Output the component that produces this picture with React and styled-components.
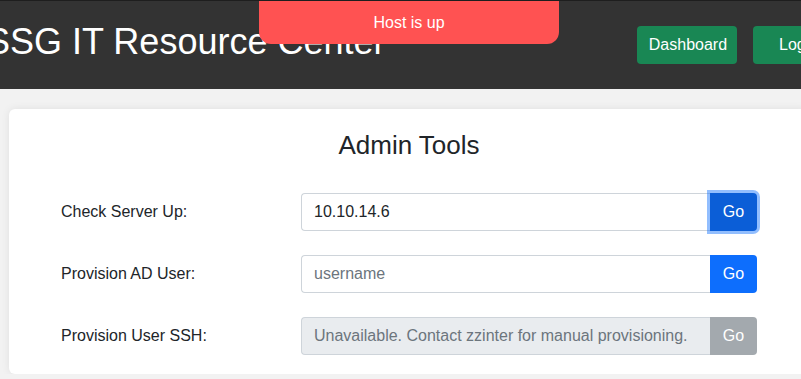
import React from 'react'
import styled, { createGlobalStyle } from 'styled-components'

const GlobalStyle = createGlobalStyle`
    html, body {
        margin: 0;
        padding: 0;
        background-color: #f2f2f2;
        overflow: hidden;
        font-family: "Liberation Sans", Arial, sans-serif;
    }
`

const Page = styled.div`
    width: 818px;
    position: relative;
`

const Header = styled.header`
    background-color: #333333;
    border-top: 1px solid #1e1e1e;
    height: 88px;
    display: flex;
    align-items: center;
    justify-content: space-between;
`

const Title = styled.h1`
    margin: 0 0 0 -14px;
    padding-bottom: 7px;
    font-size: 36px;
    font-weight: 400;
    line-height: 1.2;
    color: #ffffff;
    white-space: nowrap;
`

const Nav = styled.nav`
    display: flex;
    gap: 16px;
    margin-right: -36px;
`

const NavButton = styled.a`
    display: flex;
    align-items: center;
    height: 38px;
    padding: ${p => p.$wide ? '0 26px' : '0 10px 0 12px'};
    box-sizing: border-box;
    background-color: #198754;
    border-radius: 4px;
    color: #ffffff;
    font-size: 16px;
    text-decoration: none;
`

const Toast = styled.div`
    position: absolute;
    top: 1px;
    left: 50%;
    transform: translateX(-50%);
    width: 300px;
    height: 43px;
    display: flex;
    align-items: center;
    justify-content: center;
    background-color: #ff5252;
    border-radius: 0 0 12px 12px;
    color: #ffffff;
    font-size: 16px;
`

const Main = styled.main`
    padding: 20px 9px 0;
`

const Card = styled.section`
    background-color: #ffffff;
    border-radius: 6px;
    box-shadow: 0 0 8px rgba(0, 0, 0, 0.08);
    padding: 21px 52px 19px;
`

const CardTitle = styled.h2`
    margin: 0 0 32px;
    text-align: center;
    font-size: 26px;
    font-weight: 400;
    line-height: 1.2;
    color: #212529;
`

const Form = styled.div`
    display: grid;
    grid-template-columns: 240px 456px;
    row-gap: 24px;
    align-items: center;
`

const Label = styled.label`
    font-size: 16px;
    color: #212529;
`

const InputGroup = styled.div`
    display: flex;
    height: 38px;
`

const Input = styled.input`
    flex: 1;
    min-width: 0;
    box-sizing: border-box;
    height: 38px;
    padding: 0 12px;
    border: 1px solid #ced4da;
    border-right: none;
    border-radius: 4px 0 0 4px;
    background-color: ${p => p.disabled ? '#e9ecef' : '#ffffff'};
    color: #212529;
    font-family: inherit;
    font-size: 16px;
    outline: none;
    &::placeholder {
        color: #6c757d;
    }
`

const GoButton = styled.button`
    width: 47px;
    height: 38px;
    border: none;
    border-radius: 0 4px 4px 0;
    background-color: ${p => p.$focused ? '#0b5ed7' : '#0d6efd'};
    box-shadow: ${p => p.$focused ? '0 0 0 3px rgba(13, 110, 253, 0.45)' : 'none'};
    color: #ffffff;
    font-family: inherit;
    font-size: 16px;
    position: relative;
    &:disabled {
        background-color: #6c757d;
        opacity: 0.62;
    }
`

function App() {
    return (
        <Page>
            <GlobalStyle />
            <Header>
                <Title>SSG IT Resource Center</Title>
                <Nav>
                    <NavButton href="#">Dashboard</NavButton>
                    <NavButton href="#" $wide>Logout</NavButton>
                </Nav>
            </Header>
            <Toast>Host is up</Toast>
            <Main>
                <Card>
                    <CardTitle>Admin Tools</CardTitle>
                    <Form>
                        <Label>Check Server Up:</Label>
                        <InputGroup>
                            <Input type="text" defaultValue="10.10.14.6" />
                            <GoButton $focused>Go</GoButton>
                        </InputGroup>

                        <Label>Provision AD User:</Label>
                        <InputGroup>
                            <Input type="text" placeholder="username" />
                            <GoButton>Go</GoButton>
                        </InputGroup>

                        <Label>Provision User SSH:</Label>
                        <InputGroup>
                            <Input type="text" disabled placeholder="Unavailable. Contact zzinter for manual provisioning." />
                            <GoButton disabled>Go</GoButton>
                        </InputGroup>
                    </Form>
                </Card>
            </Main>
        </Page>
    )
}

export default App
